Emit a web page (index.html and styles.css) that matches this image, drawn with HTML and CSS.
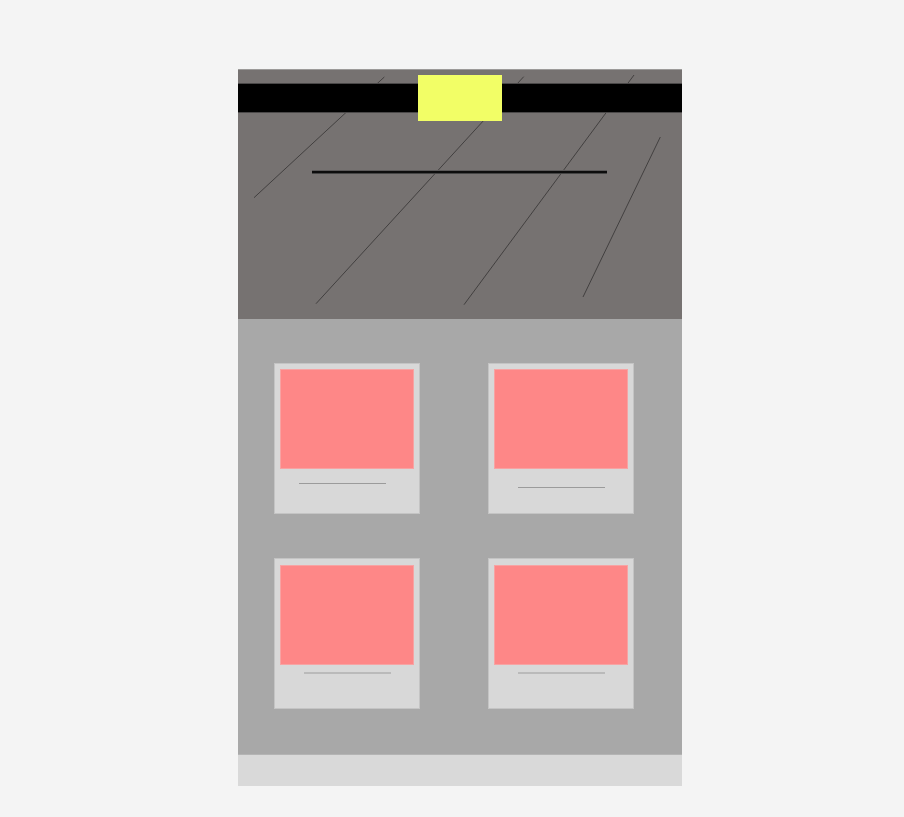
FILE: index.html
```html
<!DOCTYPE html>
<html lang="en">
<head>
<meta charset="utf-8">
<title>Gallery</title>
<link rel="stylesheet" href="styles.css">
</head>
<body>
<div class="page">
  <header class="hero">
    <svg class="hero-lines" width="444" height="250" viewBox="0 0 444 250">
      <line x1="146.3" y1="7" x2="16" y2="127.7"/>
      <line x1="285.7" y1="6.7" x2="78" y2="233.7"/>
      <line x1="396" y1="5" x2="226" y2="234.7"/>
      <line x1="422.3" y1="67" x2="345" y2="227"/>
    </svg>
    <div class="nav-bar"></div>
    <div class="logo"></div>
    <div class="rule"></div>
  </header>
  <main class="gallery">
    <div class="card">
      <div class="thumb"></div>
      <div class="cap cap-a"></div>
    </div>
    <div class="card">
      <div class="thumb"></div>
      <div class="cap cap-b"></div>
    </div>
    <div class="card">
      <div class="thumb thumb-low"></div>
      <div class="cap cap-c"></div>
    </div>
    <div class="card">
      <div class="thumb thumb-low"></div>
      <div class="cap cap-c"></div>
    </div>
  </main>
  <footer class="foot"></footer>
</div>
</body>
</html>
```
FILE: styles.css
```css
html, body {
  margin: 0;
  padding: 0;
  background: #f4f4f4;
  font-family: "Liberation Sans", Arial, sans-serif;
}

.page {
  width: 444px;
  margin: 69px 0 0 238px;
  display: flex;
  flex-direction: column;
}

.hero {
  position: relative;
  height: 250px;
  box-sizing: border-box;
  background: #767271;
  border-top: 1px solid #9c9a99;
  padding-top: 14px;
  display: flex;
  flex-direction: column;
}

.hero-lines {
  position: absolute;
  left: 0;
  top: 0;
  stroke: #3c3a3a;
  stroke-width: 0.9;
  fill: none;
}

.nav-bar {
  position: relative;
  height: 28px;
  background: #000;
  box-shadow: 0 -1px 0 #4a4848, 0 1px 0 #4a4848;
}

.logo {
  position: absolute;
  left: 180px;
  top: 5px;
  width: 84px;
  height: 46px;
  background: #f2fe66;
}

.rule {
  position: relative;
  margin: 59px 75px 0 74px;
  height: 2px;
  background: #0c0c0c;
  box-shadow: 0 1px 0 #444, 0 -1px 0 #5a5858;
}

.gallery {
  background: #a8a8a8;
  height: 435px;
  box-sizing: border-box;
  padding: 44px 0 45px 36px;
  display: grid;
  grid-template-columns: 146px 146px;
  grid-auto-rows: 151px;
  column-gap: 68px;
  row-gap: 44px;
}

.card {
  box-sizing: border-box;
  background: #d8d8d8;
  border: 1px solid #c4c4c4;
  padding: 5px;
  display: flex;
  flex-direction: column;
}

.thumb {
  width: 134px;
  height: 100px;
  box-sizing: border-box;
  background: #fe8787;
  border: 1px solid #f7a3a3;
}

.thumb-low {
  margin-top: 1px;
}

.cap {
  width: 87px;
  height: 1px;
  background: #9b9b9b;
}

.cap-a {
  margin: 14px 0 0 19px;
}

.cap-b {
  margin: 18px 0 0 24px;
}

.cap-c {
  height: 2px;
  background: #bababa;
  margin: 7px 0 0 24px;
}

.foot {
  height: 32px;
  background: #d9d9d9;
  border-top: 1px solid #b4b4b4;
  box-sizing: border-box;
}
```
